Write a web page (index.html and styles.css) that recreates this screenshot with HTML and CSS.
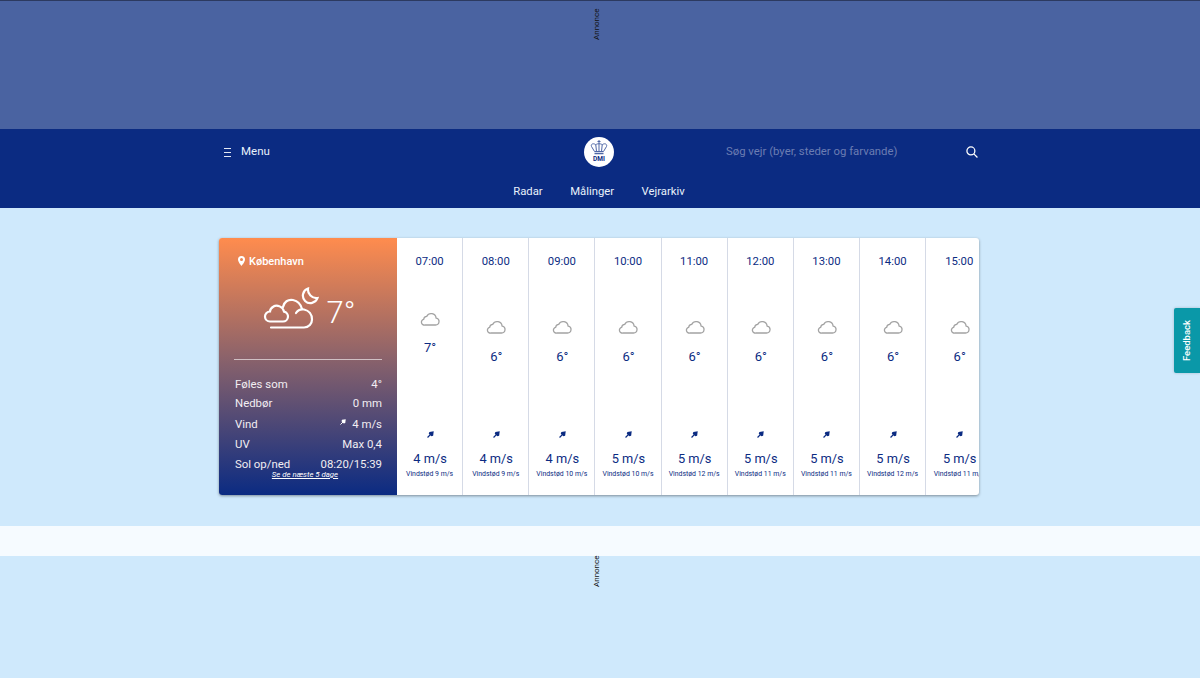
FILE: index.html
```html
<!DOCTYPE html>
<html lang="da">
<head>
	<meta charset="UTF-8">
	<meta name="viewport" content="width=device-width, initial-scale=1.0">
	<title>DMI</title>
	<link rel="stylesheet" href="styles.css">
</head>
<body>
	<svg class="defs" width="0" height="0">
		<symbol id="cloud" viewBox="0 0 20 14">
			<path d="M5 13h10.500a3.500 3.500 0 0 0 .6-6.950 5 5 0 0 0-9.400-1.700A3.300 3.300 0 0 0 3.700 7.300 2.900 2.900 0 0 0 5 13z" fill="#fff" stroke="#a3a3a3" stroke-width="1.300"/>
		</symbol>
		<symbol id="arrow" viewBox="0 0 8 8">
			<path d="M.6 7.400 4 4" stroke="#0b2b82" stroke-width="1.300" fill="none"/>
			<path d="M7.700.3 7 5.300 5 6 2 3 2.700 1z" fill="#0b2b82"/>
		</symbol>
	</svg>

	<div class="ad-top"><span class="ad-label">Annonce</span></div>

	<header class="site-header">
		<div class="header-top">
			<a class="menu-btn" href="#">
				<span class="burger"><i></i><i></i><i></i></span>
				<span class="menu-text">Menu</span>
			</a>
			<a class="logo" href="#">
				<svg width="18" height="15" viewBox="0 0 18 15" fill="none" stroke="#4f67a6" stroke-width="1">
					<path d="M9 0v4M7.500 1.500h3"/>
					<path d="M4.500 11.500 1.500 6.500C.5 4 3.500 2.800 5.800 4.800 6.800 3.800 8 3.800 9 3.800s2.200 0 3.200 1c2.300-2 5.300-.8 4.300 1.700l-3 5z"/>
					<path d="M6.500 11.500 5.800 4.800M11.500 11.500l.7-6.700M9 3.800v7.700"/>
					<path d="M4.500 13.500h9" stroke-width="1.500"/>
				</svg>
				<span class="logo-text">DMI</span>
			</a>
			<div class="search">
				<span class="search-text">Søg vejr (byer, steder og farvande)</span>
				<svg width="12" height="12" viewBox="0 0 13 13" fill="none" stroke="#fff" stroke-width="1.400">
					<circle cx="5.300" cy="5.300" r="4.300"/>
					<path d="M8.500 8.500 12.400 12.400"/>
				</svg>
			</div>
		</div>
		<nav class="main-nav">
			<a href="#">Radar</a>
			<a href="#">Målinger</a>
			<a href="#">Vejrarkiv</a>
		</nav>
	</header>

	<main class="content">
		<section class="weather-card">
			<div class="now">
				<div class="place">
					<svg width="7" height="10" viewBox="0 0 7 10">
						<path d="M3.500 0A3.500 3.500 0 0 0 0 3.500C0 6 3.500 10 3.500 10S7 6 7 3.500A3.500 3.500 0 0 0 3.500 0zm0 5A1.500 1.500 0 1 1 3.500 2a1.500 1.500 0 0 1 0 3z" fill="#fff"/>
					</svg>
					København
				</div>
				<div class="now-main">
					<svg class="now-icon" width="56" height="44" viewBox="0 0 56 44" fill="none" stroke="#fff" stroke-width="2.200" stroke-linecap="round">
						<path d="M45 2.500A7.500 7.500 0 1 0 54.500 12 8.500 8.500 0 0 1 45 2.500z"/>
						<path d="M7 35.500h13a5 5 0 0 0 1-9.900C20 21 14 18 10.500 20.500 8 22 7 24 7 25.500a5 5 0 0 0 0 10z"/>
						<path d="M20 21c1-5 5-8 10-7 5 1 8 5 9 9"/>
						<path d="M33 27c2-3 5-4 8-3.500 5 1 8 5 8 10 0 4-3 8-8 8H8"/>
					</svg>
					<span class="now-temp">7°</span>
				</div>
				<hr class="now-line">
				<dl class="now-list">
					<div><dt>Føles som</dt><dd>4°</dd></div>
					<div class="rain-row"><dt>Nedbør</dt><dd>0 mm</dd></div>
					<div class="wind-row"><dt>Vind</dt><dd><svg class="wind-small" width="6" height="6" viewBox="0 0 8 8"><path d="M.6 7.400 4 4" stroke="#fff" stroke-width="1.300"/><path d="M7.700.3 7 5.300 5 6 2 3 2.700 1z" fill="#fff"/></svg>4 m/s</dd></div>
					<div><dt>UV</dt><dd>Max 0,4</dd></div>
					<div><dt>Sol op/ned</dt><dd>08:20/15:39</dd></div>
				</dl>
				<a class="five-days" href="#">Se de næste 5 dage</a>
			</div>

			<div class="hours">
				<div class="hour first">
					<div class="time">07:00</div>
					<svg class="cloud" width="20" height="14"><use href="#cloud"/></svg>
					<div class="temp">7°</div>
					<svg class="wind-arrow" width="7" height="7"><use href="#arrow"/></svg>
					<div class="wind">4 m/s</div>
					<div class="gust">Vindstød 9 m/s</div>
				</div>
				<div class="hour">
					<div class="time">08:00</div>
					<svg class="cloud" width="20" height="14"><use href="#cloud"/></svg>
					<div class="temp">6°</div>
					<svg class="wind-arrow" width="7" height="7"><use href="#arrow"/></svg>
					<div class="wind">4 m/s</div>
					<div class="gust">Vindstød 9 m/s</div>
				</div>
				<div class="hour">
					<div class="time">09:00</div>
					<svg class="cloud" width="20" height="14"><use href="#cloud"/></svg>
					<div class="temp">6°</div>
					<svg class="wind-arrow" width="7" height="7"><use href="#arrow"/></svg>
					<div class="wind">4 m/s</div>
					<div class="gust">Vindstød 10 m/s</div>
				</div>
				<div class="hour">
					<div class="time">10:00</div>
					<svg class="cloud" width="20" height="14"><use href="#cloud"/></svg>
					<div class="temp">6°</div>
					<svg class="wind-arrow" width="7" height="7"><use href="#arrow"/></svg>
					<div class="wind">5 m/s</div>
					<div class="gust">Vindstød 10 m/s</div>
				</div>
				<div class="hour">
					<div class="time">11:00</div>
					<svg class="cloud" width="20" height="14"><use href="#cloud"/></svg>
					<div class="temp">6°</div>
					<svg class="wind-arrow" width="7" height="7"><use href="#arrow"/></svg>
					<div class="wind">5 m/s</div>
					<div class="gust">Vindstød 12 m/s</div>
				</div>
				<div class="hour">
					<div class="time">12:00</div>
					<svg class="cloud" width="20" height="14"><use href="#cloud"/></svg>
					<div class="temp">6°</div>
					<svg class="wind-arrow" width="7" height="7"><use href="#arrow"/></svg>
					<div class="wind">5 m/s</div>
					<div class="gust">Vindstød 11 m/s</div>
				</div>
				<div class="hour">
					<div class="time">13:00</div>
					<svg class="cloud" width="20" height="14"><use href="#cloud"/></svg>
					<div class="temp">6°</div>
					<svg class="wind-arrow" width="7" height="7"><use href="#arrow"/></svg>
					<div class="wind">5 m/s</div>
					<div class="gust">Vindstød 11 m/s</div>
				</div>
				<div class="hour">
					<div class="time">14:00</div>
					<svg class="cloud" width="20" height="14"><use href="#cloud"/></svg>
					<div class="temp">6°</div>
					<svg class="wind-arrow" width="7" height="7"><use href="#arrow"/></svg>
					<div class="wind">5 m/s</div>
					<div class="gust">Vindstød 12 m/s</div>
				</div>
				<div class="hour">
					<div class="time">15:00</div>
					<svg class="cloud" width="20" height="14"><use href="#cloud"/></svg>
					<div class="temp">6°</div>
					<svg class="wind-arrow" width="7" height="7"><use href="#arrow"/></svg>
					<div class="wind">5 m/s</div>
					<div class="gust">Vindstød 11 m/s</div>
				</div>
			</div>
		</section>
	</main>

	<div class="strip"></div>
	<div class="ad-bottom"><span class="ad-label">Annonce</span></div>

	<a class="feedback" href="#"><span>Feedback</span></a>
</body>
</html>
```

FILE: styles.css
```css
body {
	font-family: Roboto, "Liberation Sans", sans-serif;
	margin: 0;
	padding: 0;
	height: 678px;
	overflow: hidden;
	background-color: #cfe9fc;
}
a {
	color: inherit;
	text-decoration: none;
}
.defs {
	position: absolute;
}
.ad-label {
	writing-mode: vertical-rl;
	transform: rotate(180deg);
	font-size: 8px;
	line-height: 10px;
	color: #111;
	height: 31px;
}

/* top ad */
.ad-top {
	height: 120px;
	background-color: #4a63a1;
	border-top: 1px solid #2c3a60;
	display: flex;
	justify-content: center;
	padding: 8px 6px 0 0;
}

/* header */
.site-header {
	background-color: #0b2b82;
	color: #fff;
	height: 79px;
	padding-right: 2px;
}
.header-top {
	width: 760px;
	margin: 0 auto;
	display: flex;
	align-items: center;
	padding-top: 8px;
	height: 30px;
}
.menu-btn {
	display: flex;
	align-items: center;
	gap: 11px;
	font-size: 11.500px;
	margin-left: 4px;
	width: 361px;
	color: #e8f1fb;
}
.menu-text {
	margin: -2px 0 0 -1px;
}
.burger {
	display: flex;
	flex-direction: column;
	gap: 3px;
	width: 7px;
	padding: 1px 0 0 1px;
}
.burger i {
	display: block;
	height: 1px;
	background-color: #e4e9f4;
}
.logo {
	width: 30px;
	height: 30px;
	border-radius: 50%;
	background-color: #fff;
	display: flex;
	flex-direction: column;
	align-items: center;
	padding-top: 3px;
	box-sizing: border-box;
	flex-shrink: 0;
}
.logo-text {
	font-size: 6.500px;
	line-height: 7px;
	font-weight: 700;
	color: #0b2b82;
	margin-top: 1px;
}
.search {
	display: flex;
	align-items: center;
	justify-content: space-between;
	margin-left: 112px;
	width: 252px;
	font-size: 11.350px;
}
.search-text {
	color: #6b7db2;
	margin-top: -2px;
}
.main-nav {
	display: flex;
	justify-content: center;
	gap: 27.500px;
	font-size: 11.300px;
	padding-top: 18px;
	color: #e8f1fb;
}

/* card */
.content {
	height: 318px;
	padding: 30px 2px 0 0;
	box-sizing: border-box;
}
.weather-card {
	width: 760px;
	height: 257px;
	margin: 0 auto;
	display: flex;
	background-color: #fff;
	border-radius: 3px;
	overflow: hidden;
	box-shadow: 0 1px 3px rgba(0, 0, 0, .4);
}
.now {
	width: 178px;
	flex-shrink: 0;
	box-sizing: border-box;
	padding: 16px 15px 0;
	color: #fff;
	background: linear-gradient(#ff8c4e 0%, #85606c 49%, #0b2b82 100%);
}
.place {
	display: flex;
	align-items: center;
	gap: 4px;
	font-size: 11px;
	font-weight: 500;
	padding-left: 4px;
	height: 14px;
}
.now-main {
	display: flex;
	justify-content: center;
	margin-top: 18px;
	height: 44px;
	padding-left: 2px;
}
.now-temp {
	font-size: 31px;
	line-height: 38px;
	font-weight: 300;
	margin-left: 8px;
	padding-top: 8px;
}
.now-line {
	margin: 29px 0 0;
	border: 0;
	height: 1px;
	background-color: rgba(255, 255, 255, .6);
}
.now-list {
	margin: 14px 0 0;
	font-size: 11.400px;
	line-height: 20px;
	color: #f2eef2;
}
.now-list div {
	display: flex;
	justify-content: space-between;
}
.now-list dt {
	padding-left: 1px;
}
.now-list dd {
	margin: 0;
}
.rain-row {
	margin-top: -1px;
}
.wind-row {
	padding-top: 1px;
}
.wind-small {
	margin-right: 6px;
	vertical-align: 3px;
}
.five-days {
	display: block;
	text-align: center;
	font-size: 7.800px;
	font-style: italic;
	line-height: 8px;
	text-decoration: underline;
	margin-top: -3px;
	padding-right: 6px;
}

/* hourly columns */
.hours {
	flex: 1;
	display: flex;
	overflow: hidden;
}
.hour {
	width: 66.150px;
	flex-shrink: 0;
	box-sizing: border-box;
	border-right: 1px solid #d5dae6;
	display: flex;
	flex-direction: column;
	align-items: center;
	color: #0b2b82;
	padding: 17px 0 0 1px;
}
.hour:last-child {
	border-right: 0;
}
.time {
	font-size: 11.300px;
	line-height: 14px;
	margin-left: -1px;
}
.cloud {
	margin-top: 51px;
	flex-shrink: 0;
}
.first .cloud {
	margin-top: 43px;
}
.temp {
	font-size: 13px;
	line-height: 15px;
	margin-top: 15px;
}
.first .temp {
	margin-top: 14px;
}
.wind-arrow {
	margin-top: 67px;
	flex-shrink: 0;
}
.first .wind-arrow {
	margin-top: 76px;
}
.wind {
	font-size: 12.800px;
	line-height: 16px;
	margin-top: 13px;
}
.gust {
	font-size: 6.900px;
	line-height: 9px;
	margin: 3px 0 0 -1px;
	white-space: nowrap;
}

/* bottom */
.strip {
	height: 30px;
	background-color: #f6fbff;
}
.ad-bottom {
	display: flex;
	justify-content: center;
	padding-right: 6px;
}
.feedback {
	position: absolute;
	top: 308px;
	right: 0;
	width: 25px;
	height: 65px;
	padding-right: 1px;
	background-color: #0a98a8;
	border-radius: 2px 0 0 2px;
	box-shadow: 0 0 3px rgba(0, 0, 0, .2);
	display: flex;
	align-items: center;
	justify-content: center;
	color: #fff;
	font-size: 9.500px;
	font-weight: 500;
}
.feedback span {
	writing-mode: vertical-rl;
	transform: rotate(180deg);
}
```
